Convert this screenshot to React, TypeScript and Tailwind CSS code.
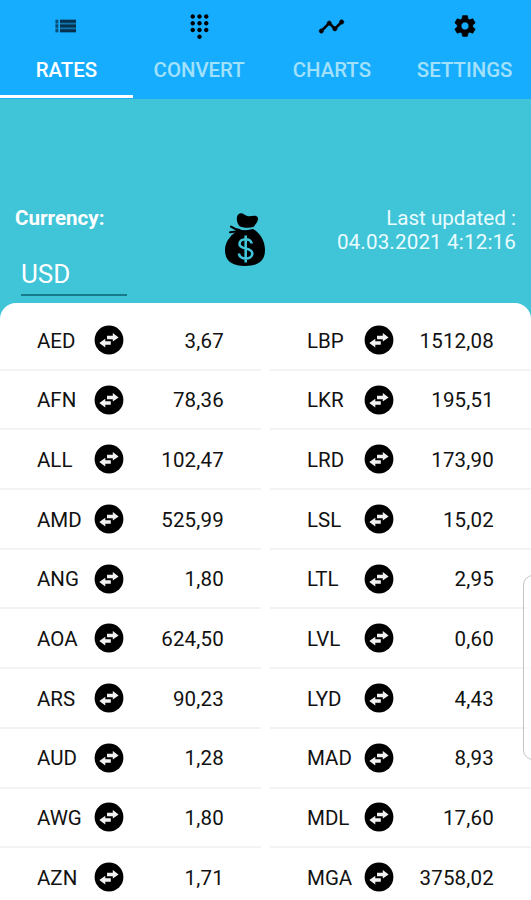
type TRate = { code: string, value: string }

const leftRates: TRate[] = [
    { code: "AED", value: "3,67" },
    { code: "AFN", value: "78,36" },
    { code: "ALL", value: "102,47" },
    { code: "AMD", value: "525,99" },
    { code: "ANG", value: "1,80" },
    { code: "AOA", value: "624,50" },
    { code: "ARS", value: "90,23" },
    { code: "AUD", value: "1,28" },
    { code: "AWG", value: "1,80" },
    { code: "AZN", value: "1,71" },
]

const rightRates: TRate[] = [
    { code: "LBP", value: "1512,08" },
    { code: "LKR", value: "195,51" },
    { code: "LRD", value: "173,90" },
    { code: "LSL", value: "15,02" },
    { code: "LTL", value: "2,95" },
    { code: "LVL", value: "0,60" },
    { code: "LYD", value: "4,43" },
    { code: "MAD", value: "8,93" },
    { code: "MDL", value: "17,60" },
    { code: "MGA", value: "3758,02" },
]

function ListIcon() {
    return (
        <svg viewBox="0 0 24 14" className="w-6 h-3.5 text-[#063250]" fill="currentColor">
            <path d="M1.500 .8h2.800v12.400H1.500zM6 .8h16v12.400H6z" opacity=".45" />
            <path d="M1.500 .8h2.800v3H1.500zM1.500 5.500h2.800v3H1.500zM1.500 10.200h2.800v3H1.500z" opacity=".6" />
            <path d="M6 .8h16v3H6zM6 5.500h16v3H6zM6 10.200h16v3H6z" />
        </svg>
    )
}

function DialpadIcon() {
    return (
        <svg viewBox="0 0 24 24" className="w-[27px] h-[27px]">
            <path d="M12 19c-1.1 0-2 .9-2 2s.9 2 2 2 2-.9 2-2-.9-2-2-2zM6 1c-1.1 0-2 .9-2 2s.9 2 2 2 2-.9 2-2-.9-2-2-2zm0 6c-1.1 0-2 .9-2 2s.9 2 2 2 2-.9 2-2-.9-2-2-2zm0 6c-1.1 0-2 .9-2 2s.9 2 2 2 2-.9 2-2-.9-2-2-2zm12-8c1.1 0 2-.9 2-2s-.9-2-2-2-2 .9-2 2 .9 2 2 2zm-6 8c-1.1 0-2 .9-2 2s.9 2 2 2 2-.9 2-2-.9-2-2-2zm6 0c-1.1 0-2 .9-2 2s.9 2 2 2 2-.9 2-2-.9-2-2-2zm0-6c-1.1 0-2 .9-2 2s.9 2 2 2 2-.9 2-2-.9-2-2-2zm-6 0c-1.1 0-2 .9-2 2s.9 2 2 2 2-.9 2-2-.9-2-2-2zm0-6c-1.1 0-2 .9-2 2s.9 2 2 2 2-.9 2-2-.9-2-2-2z" />
        </svg>
    )
}

function ChartIcon() {
    return (
        <svg viewBox="0 0 24 24" className="w-[27px] h-[27px]">
            <path stroke="#000" strokeWidth=".4" d="M23 8c0 1.100-.9 2-2 2-.18 0-.35-.02-.51-.07l-3.560 3.550c.05.160.07.340.07.520 0 1.100-.9 2-2 2s-2-.9-2-2c0-.18.020-.36.070-.52l-2.550-2.550c-.16.050-.34.070-.52.070s-.36-.02-.52-.07l-4.550 4.560c.05.160.07.330.07.510 0 1.100-.9 2-2 2s-2-.9-2-2 .9-2 2-2c.18 0 .35.020.510.070l4.560-4.550C8.020 9.360 8 9.180 8 9c0-1.100.9-2 2-2s2 .9 2 2c0 .18-.02.360-.07.520l2.550 2.550c.16-.05.340-.07.520-.07s.36.020.520.070l3.550-3.560C19.020 8.350 19 8.180 19 8c0-1.100.9-2 2-2s2 .9 2 2z" />
        </svg>
    )
}

function GearIcon() {
    return (
        <svg viewBox="0 0 24 24" className="w-[26px] h-[26px]">
            <path stroke="#000" strokeWidth=".5" d="M19.140 12.940c.04-.3.060-.61.060-.94 0-.32-.02-.64-.07-.94l2.030-1.580c.18-.14.230-.41.120-.61l-1.920-3.320c-.12-.22-.37-.29-.59-.22l-2.390.960c-.5-.38-1.030-.7-1.620-.94l-.36-2.540c-.04-.24-.24-.41-.48-.41h-3.840c-.24 0-.43.170-.47.410l-.36 2.540c-.59.240-1.130.570-1.620.940l-2.390-.96c-.22-.08-.47 0-.59.220L2.740 8.870c-.12.210-.08.470.120.610l2.030 1.580c-.05.300-.09.630-.09.940s.02.640.070.940l-2.030 1.580c-.18.140-.23.410-.12.610l1.920 3.320c.12.220.370.290.590.220l2.390-.96c.5.380 1.030.700 1.620.940l.36 2.540c.05.240.240.410.480.410h3.840c.24 0 .44-.17.470-.41l.36-2.540c.59-.24 1.130-.56 1.620-.94l2.390.960c.22.080.470 0 .590-.22l1.920-3.320c.12-.22.070-.47-.12-.61l-2.010-1.580zM12 15.600c-1.980 0-3.600-1.620-3.600-3.600s1.620-3.600 3.600-3.600 3.600 1.620 3.600 3.600-1.620 3.600-3.600 3.600z" />
        </svg>
    )
}

function MoneyBagIcon() {
    return (
        <svg viewBox="0 0 42 56" className="w-[42px] h-14 shrink-0">
            <path d="M16 14.500C13.500 12 12.300 8.500 13 5C13.500 2.500 15.500 1 17.500 1.300C20 1.800 21 3.800 24 4.200C27 4.500 30 3.200 32.500 4.200C35 5.500 34 8.500 32.500 11L29.500 15C25 16.300 20 16 16 14.500z" />
            <path d="M15.500 17.500C20 18.500 25 18.300 29 17C35 20.500 41 28 41 38C41 49 34 54 21 54S1 49 1 38C1 29 8 21.500 15.500 17.500z" />
            <path d="M15.500 18C12 17.500 9.500 16.300 7 14.600M15.500 18.500C12 19.500 8.500 20.300 6 20.200" fill="none" stroke="#000" strokeWidth="2" strokeLinecap="round" />
            <path d="M27.800 31.500C27 28.800 25 27.300 21.700 27.300C17.800 27.300 15.500 29.300 15.500 32C15.500 38.200 28.300 35 28.300 41.500C28.300 44.500 25.500 46.500 21.700 46.500C17.800 46.500 15.500 44.500 14.800 41.500M21.700 23.500V50.500" fill="none" stroke="#40c4d8" strokeWidth="2.600" />
        </svg>
    )
}

function SwapIcon() {
    return (
        <svg viewBox="0 0 30 30" className="w-[30px] h-[30px] shrink-0">
            <circle cx="15" cy="15" r="14.400" />
            <path d="M18.800 8L24.600 12.400L18.800 16.600V14.300H13V10.800H18.800zM11.300 13.800V16.300H16.800V19.700H11.300V22.400L5.300 18z" fill="#f2f2f2" />
        </svg>
    )
}

function Tab({ label, icon, active }: { label: string, icon: React.ReactNode, active?: boolean }) {
    return (
        <button className={`flex flex-col items-center flex-1 border-b-[3px] ${active ? "border-white text-white" : "border-transparent text-[#a3e1fb]"}`}>
            <span className="flex h-[52px] items-center justify-center text-black">{icon}</span>
            <span className="text-[20.4px] leading-9 font-medium">{label}</span>
        </button>
    )
}

function RateColumn({ rates }: { rates: TRate[] }) {
    return (
        <ul className="w-[261px]">
            {rates.map((rate) =>
                <li key={rate.code} className="flex items-center h-[59.7px] border-b-2 border-[#f3f3f3] pl-[37px] pr-[37px]">
                    <span className="w-[57px] pt-[1.5px] text-[20.5px] leading-[30px] whitespace-nowrap">{rate.code}</span>
                    <SwapIcon />
                    <span className="flex-1 pt-[1.5px] text-right text-[20.5px] leading-[30px] tracking-[0.2px]">{rate.value}</span>
                </li>
            )}
        </ul>
    )
}

export default function App() {
    return (
        <main className="relative w-[531px] h-[900px] overflow-hidden bg-[#40c4d8] font-[Roboto,sans-serif] text-[#111]">
            <nav className="flex h-[99px] bg-[#17adff] pb-px">
                <Tab label="RATES" icon={<ListIcon />} active />
                <Tab label="CONVERT" icon={<DialpadIcon />} />
                <Tab label="CHARTS" icon={<ChartIcon />} />
                <Tab label="SETTINGS" icon={<GearIcon />} />
            </nav>

            <header className="flex h-[204px] pt-[107px] pl-[15px] pr-[15px] text-white">
                <div className="w-[209px]">
                    <p className="text-[20.6px] leading-6 font-bold">Currency:</p>
                    <div className="ml-1.5 mt-[25px] w-[106px] h-[41px] border-b-2 border-[#187b8c] text-[26px] leading-[38px]">USD</div>
                </div>
                <div className="pt-[6px]"><MoneyBagIcon /></div>
                <p className="flex-1 text-right text-[20.6px] leading-6 text-[#e9fcff]">Last updated :<br /><span className="tracking-[0.15px]">04.03.2021 4:12:16</span></p>
            </header>

            <section className="flex gap-[9px] h-[610px] pt-2 rounded-t-2xl bg-white overflow-hidden">
                <RateColumn rates={leftRates} />
                <RateColumn rates={rightRates} />
            </section>

            {/* edge panel handle */}
            <div className="absolute left-[523px] top-[575px] w-6 h-[185px] rounded-[10px] border border-[#c4c4c4] bg-white/60" />
        </main>
    )
}
